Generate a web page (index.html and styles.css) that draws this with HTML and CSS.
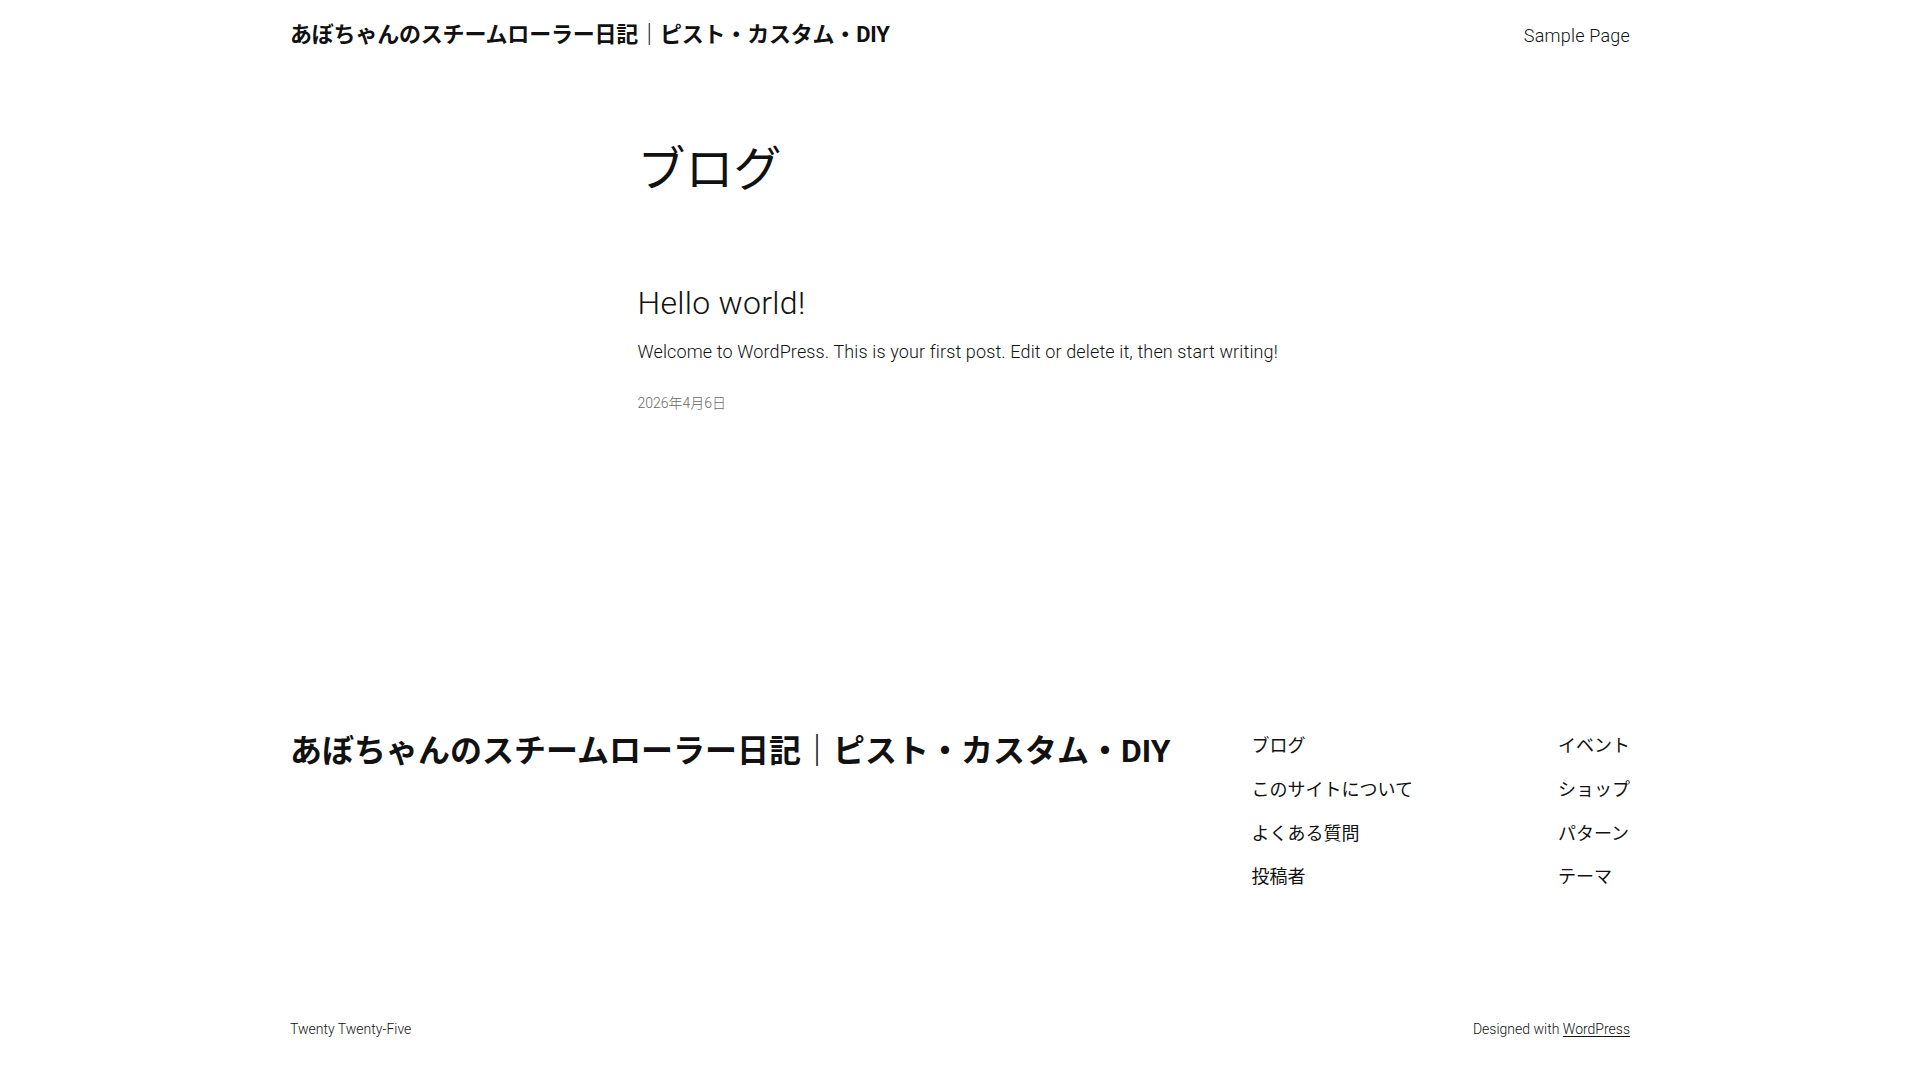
FILE: index.html
```html
<!DOCTYPE html>
<html lang="ja">
<head>
<meta charset="utf-8">
<title>ブログ – あぼちゃんのスチームローラー日記｜ピスト・カスタム・DIY</title>
<link rel="stylesheet" href="styles.css">
</head>
<body>
<header class="site-header">
  <p class="site-title"><a href="#">あぼちゃんのスチームローラー日記｜ピスト・カスタム・DIY</a></p>
  <nav class="header-nav"><a href="#">Sample Page</a></nav>
</header>

<main class="site-main">
  <h1 class="page-title">ブログ</h1>
  <article class="post">
    <h2 class="post-title"><a href="#">Hello world!</a></h2>
    <p class="post-excerpt">Welcome to WordPress. This is your first post. Edit or delete it, then start writing!</p>
    <p class="post-date">2026年4月6日</p>
  </article>
</main>

<footer class="site-footer">
  <div class="footer-top">
    <p class="footer-title"><a href="#">あぼちゃんのスチームローラー日記｜ピスト・カスタム・DIY</a></p>
    <div class="footer-navs">
      <ul class="footer-nav">
        <li><a href="#">ブログ</a></li>
        <li><a href="#">このサイトについて</a></li>
        <li><a href="#">よくある質問</a></li>
        <li><a href="#">投稿者</a></li>
      </ul>
      <ul class="footer-nav">
        <li><a href="#">イベント</a></li>
        <li><a href="#">ショップ</a></li>
        <li><a href="#">パターン</a></li>
        <li><a href="#">テーマ</a></li>
      </ul>
    </div>
  </div>
  <div class="footer-bottom">
    <p class="credit">Twenty Twenty-Five</p>
    <p class="credit">Designed with <a class="underline" href="#">WordPress</a></p>
  </div>
</footer>
</body>
</html>
```

FILE: styles.css
```css
html, body {
  margin: 0;
  padding: 0;
  background: #ffffff;
}

body {
  font-family: "Roboto", "Noto Sans CJK JP", sans-serif;
  font-weight: 300;
  color: #111111;
  font-size: 18px;
  line-height: 1.4;
}

a {
  color: inherit;
  text-decoration: none;
}

p, h1, h2, ul {
  margin: 0;
  padding: 0;
}

.site-header {
  width: 1340px;
  margin: 0 auto;
  padding: 20px 0;
  display: flex;
  justify-content: space-between;
  align-items: center;
}

.site-title {
  font-size: 22px;
  line-height: 1.4;
  font-weight: 700;
  letter-spacing: -0.2px;
}

.header-nav {
  font-size: 18px;
  font-weight: 300;
  letter-spacing: 0.2px;
}

.site-main {
  width: 645px;
  margin: 0 auto;
  padding-top: 72px;
}

.page-title {
  font-size: 48px;
  line-height: 1.125;
  font-weight: 400;
}

.post {
  margin-top: 87px;
  display: flex;
  flex-direction: column;
}

.post-title {
  font-size: 32px;
  line-height: 1.2;
  font-weight: 300;
  letter-spacing: 0.3px;
}

.post-excerpt {
  margin-top: 16.6px;
  font-size: 18px;
  line-height: 1.4;
  letter-spacing: 0.13px;
  white-space: nowrap;
}

.post-date {
  margin-top: 30px;
  font-size: 14px;
  line-height: 1.4;
  color: #686868;
}

.site-footer {
  width: 1340px;
  margin: 0 auto;
  padding-top: 318px;
  padding-bottom: 40px;
}

.footer-top {
  display: flex;
  justify-content: space-between;
  align-items: flex-start;
}

.footer-title {
  font-size: 32px;
  line-height: 1.2;
  font-weight: 700;
}

.footer-navs {
  display: flex;
  gap: 145px;
  padding-top: 1.5px;
}

.footer-nav {
  list-style: none;
  display: flex;
  flex-direction: column;
  gap: 18.6px;
  font-size: 18px;
  line-height: 1.4;
  font-weight: 400;
}

.footer-bottom {
  margin-top: 130px;
  display: flex;
  justify-content: space-between;
  align-items: center;
}

.credit {
  font-size: 14px;
  line-height: 1.4;
}

.underline {
  text-decoration: underline;
  text-underline-offset: 2px;
}
```
